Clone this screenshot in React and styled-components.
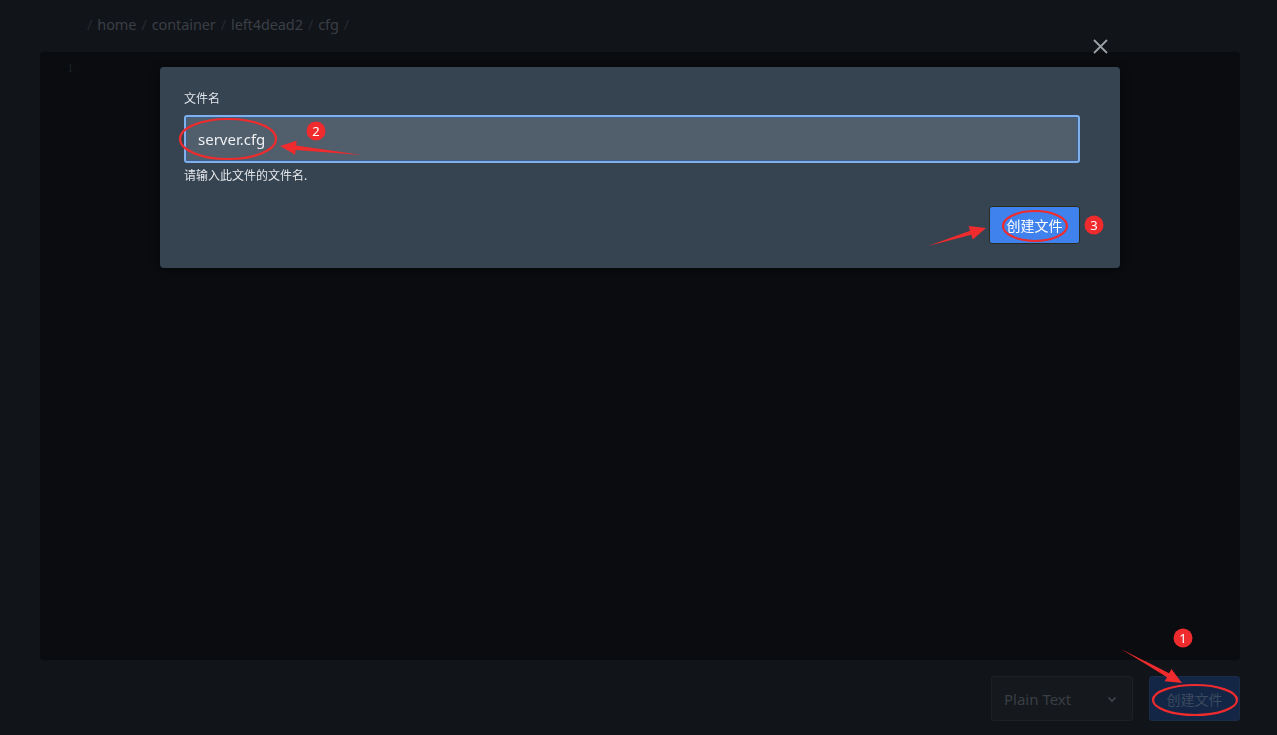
import React from 'react'
import styled, { createGlobalStyle } from 'styled-components'

const GlobalStyle = createGlobalStyle`
  html, body {
    margin: 0;
    padding: 0;
    background: #111419;
    font-family: "Noto Sans", "Noto Sans CJK SC", sans-serif;
    overflow: hidden;
  }
`

const Page = styled.div`
  width: 1277px;
  height: 735px;
  box-sizing: border-box;
  padding: 11px 37px 0 40px;
  display: flex;
  flex-direction: column;
`

const Breadcrumb = styled.div`
  display: flex;
  align-items: center;
  gap: 5px;
  height: 26px;
  padding-left: 47px;
  font-size: 14.5px;
  letter-spacing: -0.1px;
  color: #3a3f46;
`

const Slash = styled.span`
  color: #262a30;
`

const Editor = styled.div`
  margin-top: 15px;
  height: 608px;
  background: #0a0c0f;
  border-radius: 4px;
  padding: 8px 0 0 27px;
  box-sizing: border-box;
`

const LineNo = styled.div`
  font-family: "Liberation Serif", serif;
  font-size: 13px;
  color: #1d2126;
`

const Footer = styled.div`
  display: flex;
  justify-content: flex-end;
  gap: 16px;
  margin-top: 16px;
`

const Select = styled.div`
  width: 142px;
  height: 45px;
  box-sizing: border-box;
  border: 1px solid #1d2126;
  background: #15181c;
  border-radius: 3px;
  display: flex;
  align-items: center;
  justify-content: space-between;
  padding: 0 14px 0 12px;
  font-size: 15px;
  color: #393e45;
`

const FooterButton = styled.div`
  width: 91px;
  height: 45px;
  box-sizing: border-box;
  background: #132646;
  border: 1px solid #1b2c49;
  border-radius: 3px;
  display: flex;
  align-items: center;
  justify-content: center;
  font-size: 14px;
  color: #3b4a5f;
`

const Modal = styled.div`
  position: fixed;
  left: 160px;
  top: 67px;
  width: 960px;
  box-sizing: border-box;
  padding: 22px 40px 24px 24px;
  background: #364350;
  border-radius: 4px;
  box-shadow: 0 2px 8px rgba(0, 0, 0, 0.5);
  display: flex;
  flex-direction: column;
`

const Label = styled.div`
  font-size: 12px;
  color: #dde3e9;
  margin-bottom: 8px;
`

const Input = styled.div`
  height: 48px;
  box-sizing: border-box;
  background: #515e6b;
  border: 2px solid #7fb0ec;
  box-shadow: inset 0 0 0 1px #3d5f8e;
  border-radius: 3px;
  display: flex;
  align-items: center;
  padding-left: 12px;
  font-size: 15px;
  color: #eef1f4;
`

const Help = styled.div`
  font-size: 12px;
  color: #e3e7eb;
  margin-top: 3px;
`

const Actions = styled.div`
  display: flex;
  justify-content: flex-end;
  margin-top: 22px;
`

const PrimaryButton = styled.div`
  width: 91px;
  height: 38px;
  box-sizing: border-box;
  background: #3f82ee;
  border: 1px solid #2b2d1e;
  border-radius: 3px;
  display: flex;
  align-items: center;
  justify-content: center;
  font-size: 14px;
  color: #ffffff;
`

const Close = styled.svg`
  position: fixed;
  left: 1092px;
  top: 38px;
`

const Marks = styled.svg`
  position: fixed;
  left: 0;
  top: 0;
  pointer-events: none;
`

const Badge = ({ x, y, n }) => (
  <g>
    <circle cx={x} cy={y} r="9.5" fill="#ef2b2d" />
    <text x={x} y={y + 4.5} textAnchor="middle" fontSize="13" fill="#fff" fontFamily="Noto Sans, sans-serif">{n}</text>
  </g>
)

// tapered arrow from (x1,y1) to tip (x2,y2)
const Arrow = ({ x1, y1, x2, y2 }) => {
  const dx = x2 - x1
  const dy = y2 - y1
  const len = Math.hypot(dx, dy)
  const ux = dx / len
  const uy = dy / len
  const px = -uy
  const py = ux
  const hx = x2 - ux * 16
  const hy = y2 - uy * 16
  const pts = [
    [x1, y1],
    [hx + px * 2.2, hy + py * 2.2],
    [hx + px * 7, hy + py * 7],
    [x2, y2],
    [hx - px * 7, hy - py * 7],
    [hx - px * 2.2, hy - py * 2.2],
  ]
  return <polygon points={pts.map(p => p.join(',')).join(' ')} fill="#ef2b2d" />
}

export default function App() {
  return (
    <>
      <GlobalStyle />
      <Page>
        <Breadcrumb>
          <Slash>/</Slash><span>home</span>
          <Slash>/</Slash><span>container</span>
          <Slash>/</Slash><span>left4dead2</span>
          <Slash>/</Slash><span>cfg</span>
          <Slash>/</Slash>
        </Breadcrumb>
        <Editor>
          <LineNo>1</LineNo>
        </Editor>
        <Footer>
          <Select>
            <span>Plain Text</span>
            <svg width="12" height="12" viewBox="0 0 12 12">
              <path d="M2.5 4.5 L6 8 L9.5 4.5" stroke="#41464d" strokeWidth="1.6" fill="none" />
            </svg>
          </Select>
          <FooterButton>创建文件</FooterButton>
        </Footer>
      </Page>

      <Close width="17" height="17" viewBox="0 0 17 17">
        <path d="M2 2 L15 15 M15 2 L2 15" stroke="#9aa0a7" strokeWidth="1.8" />
      </Close>

      <Modal>
        <Label>文件名</Label>
        <Input>server.cfg</Input>
        <Help>请输入此文件的文件名.</Help>
        <Actions>
          <PrimaryButton>创建文件</PrimaryButton>
        </Actions>
      </Modal>

      <Marks width="1277" height="735" viewBox="0 0 1277 735">
        <g fill="none" stroke="#ef2b2d" strokeWidth="2.2">
          <ellipse cx="228" cy="139" rx="48" ry="20" />
          <ellipse cx="1035" cy="226" rx="32" ry="15" />
          <ellipse cx="1195" cy="700" rx="42" ry="15" />
        </g>
        <Arrow x1={362} y1={155} x2={280} y2={146} />
        <Arrow x1={928} y1={246} x2={986} y2={228} />
        <Arrow x1={1121} y1={649} x2={1182} y2={683} />
        <Badge x={316} y={131} n="2" />
        <Badge x={1094} y={225} n="3" />
        <Badge x={1183} y={638} n="1" />
      </Marks>
    </>
  )
}
